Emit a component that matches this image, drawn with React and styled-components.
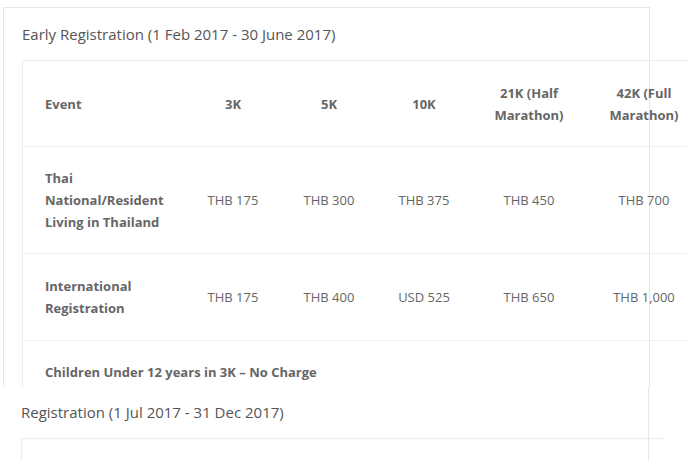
import React from "react";
import styled, { createGlobalStyle } from "styled-components";

const Global = createGlobalStyle`
  html, body { margin: 0; padding: 0; background: #fff; }
  body { font-family: "Open Sans", "Liberation Sans", sans-serif; overflow: hidden; }
`;

const Page = styled.div`
  width: 692px;
  height: 460px;
  overflow: hidden;
  padding-top: 7px;
  box-sizing: border-box;
  display: flex;
  flex-direction: column;
`;

const Panel = styled.section`
  box-sizing: border-box;
  background: #fff;
  flex: none;
  ${(p) =>
    p.$first
      ? `
    margin-left: 3px;
    width: 647px;
    height: 380px;
    border: 1px solid #e6e6e6;
    border-bottom: none;
    padding: 14px 0 0 18px;
    overflow-x: visible;
    overflow-y: clip;
  `
      : `
    width: 649px;
    flex: 1;
    border-right: 1px solid #e6e6e6;
    padding: 13px 0 0 21px;
    position: relative;
    z-index: 1;
  `}
`;

const Title = styled.h3`
  margin: 0 0 14px;
  font-size: 15px;
  line-height: 24px;
  font-weight: 400;
  color: #555;
  white-space: nowrap;
`;

const Table = styled.div`
  width: ${(p) => p.$w}px;
  border-top: 1px solid #ececec;
  border-left: 1px solid #ececec;
  box-sizing: border-box;
  height: ${(p) => (p.$h ? `${p.$h}px` : "auto")};
`;

const Row = styled.div`
  display: grid;
  grid-template-columns: 162px 96px 96px 94px 116px 100px;
  align-items: center;
  height: ${(p) => p.$h}px;
  border-bottom: ${(p) => (p.$last ? "none" : "1px solid #efefef")};
  box-sizing: content-box;
`;

const Cell = styled.div`
  font-size: 13px;
  line-height: 22px;
  color: #666;
  font-weight: ${(p) => (p.$bold ? 700 : 400)};
  text-align: ${(p) => (p.$left ? "left" : "center")};
  padding-left: ${(p) => (p.$left ? 22 : p.$shift || 0)}px;
  grid-column: ${(p) => (p.$span ? "1 / -1" : "auto")};
  align-self: ${(p) => (p.$top ? "start" : "center")};
  padding-top: ${(p) => (p.$top ? 20 : 0)}px;
  white-space: ${(p) => (p.$nowrap ? "nowrap" : "normal")};
  padding-right: ${(p) => (p.$left && !p.$span ? 20 : 0)}px;
`;

const head = ["3K", "5K", "10K", "21K (Half Marathon)", "42K (Full Marathon)"];
const rows = [
  { name: "Thai National/Resident Living in Thailand", h: 106, vals: ["THB 175", "THB 300", "THB 375", "THB 450", "THB 700"] },
  { name: "International Registration", h: 86, vals: ["THB 175", "THB 400", "USD 525", "THB 650", "THB 1,000"] },
];

export default function App() {
  return (
    <>
      <Global />
      <Page>
        <Panel $first>
          <Title>Early Registration (1 Feb 2017 - 30 June 2017)</Title>
          <Table $w={665}>
            <Row $h={85}>
              <Cell $left $bold>Event</Cell>
              {head.map((h, i) => (
                <Cell key={h} $bold $shift={i === 4 ? 14 : 0}>
                  {h}
                </Cell>
              ))}
            </Row>
            {rows.map((r) => (
              <Row key={r.name} $h={r.h}>
                <Cell $left $bold>{r.name}</Cell>
                {r.vals.map((v, i) => (
                  <Cell key={i} $shift={i === 4 ? 14 : 0} $nowrap>
                    {v}
                  </Cell>
                ))}
              </Row>
            ))}
            <Row $h={80} $last>
              <Cell $left $bold $span $top>
                Children Under 12 years in 3K – No Charge
              </Cell>
            </Row>
          </Table>
        </Panel>
        <Panel>
          <Title>Registration (1 Jul 2017 - 31 Dec 2017)</Title>
          <Table $w={642} $h={40} />
        </Panel>
      </Page>
    </>
  );
}
